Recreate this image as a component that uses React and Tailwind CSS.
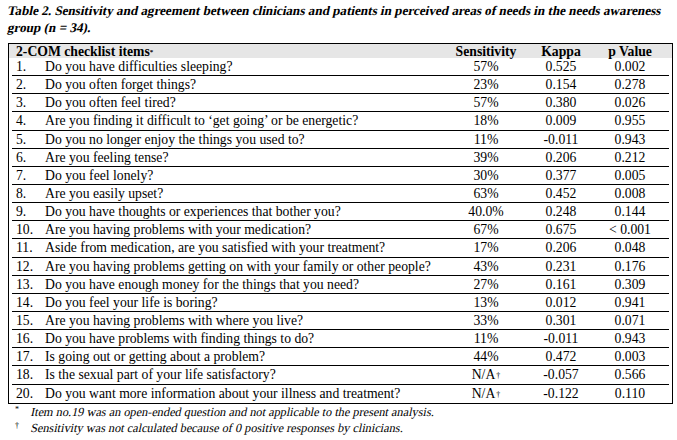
import React from 'react'

const rows = [
    ["1.", "Do you have difficulties sleeping?", "57%", "0.525", "0.002"],
    ["2.", "Do you often forget things?", "23%", "0.154", "0.278"],
    ["3.", "Do you often feel tired?", "57%", "0.380", "0.026"],
    ["4.", "Are you finding it difficult to \u2018get going\u2019 or be energetic?", "18%", "0.009", "0.955"],
    ["5.", "Do you no longer enjoy the things you used to?", "11%", "-0.011", "0.943"],
    ["6.", "Are you feeling tense?", "39%", "0.206", "0.212"],
    ["7.", "Do you feel lonely?", "30%", "0.377", "0.005"],
    ["8.", "Are you easily upset?", "63%", "0.452", "0.008"],
    ["9.", "Do you have thoughts or experiences that bother you?", "40.0%", "0.248", "0.144"],
    ["10.", "Are you having problems with your medication?", "67%", "0.675", "< 0.001"],
    ["11.", "Aside from medication, are you satisfied with your treatment?", "17%", "0.206", "0.048"],
    ["12.", "Are you having problems getting on with your family or other people?", "43%", "0.231", "0.176"],
    ["13.", "Do you have enough money for the things that you need?", "27%", "0.161", "0.309"],
    ["14.", "Do you feel your life is boring?", "13%", "0.012", "0.941"],
    ["15.", "Are you having problems with where you live?", "33%", "0.301", "0.071"],
    ["16.", "Do you have problems with finding things to do?", "11%", "-0.011", "0.943"],
    ["17.", "Is going out or getting about a problem?", "44%", "0.472", "0.003"],
    ["18.", "Is the sexual part of your life satisfactory?", "N/A", "-0.057", "0.566"],
    ["20.", "Do you want more information about your illness and treatment?", "N/A", "-0.122", "0.110"],
]

// the serif italic face isn't available, so slanted upright text stands in for it
function Slant({ children }) {
    return <span className="inline-block -skew-x-12 whitespace-nowrap">{children}</span>
}

function Row({ r, last }) {
    const na = r[2] === "N/A"
    return (
        <div className={"flex items-center h-[18.15px] mx-[3px] " + (last ? "" : "border-b border-black")}>
            <span className="w-[33px] pl-[4px] shrink-0">{r[0]}</span>
            <span className="flex-1 whitespace-nowrap">{r[1]}</span>
            <span className="w-[72px] text-center shrink-0">
                {r[2]}{na && <sup className="text-[8px] ml-[1px] relative top-[-1px]">†</sup>}
            </span>
            <span className="w-[78px] text-center shrink-0">{r[3]}</span>
            <span className="w-[60px] text-center shrink-0">{r[4]}</span>
            <span className="w-[9px] shrink-0"></span>
        </div>
    )
}

export default function App() {
    return (
        <div className="w-[677px] h-[440px] bg-white text-black overflow-hidden" style={{ fontFamily: '"Liberation Serif", "Times New Roman", serif' }}>
            <div className="pl-[8px] pt-[2px] text-[13.15px] leading-[17px] font-bold flex flex-col items-start">
                <Slant>Table 2. Sensitivity and agreement between clinicians and patients in perceived areas of needs in the needs awareness</Slant>
                <Slant>group (n = 34).</Slant>
            </div>
            <div className="ml-[8px] mt-[7px] w-[665px] border border-black text-[13.7px] leading-[17px]">
                <div className="flex items-center h-[14px] bg-[#e6e6e6] font-bold">
                    <span className="flex-1 pl-[7px] whitespace-nowrap">
                        2-COM checklist items<sup className="text-[7px] relative top-[-2px]">*</sup>
                    </span>
                    <span className="w-[72px] text-center">Sensitivity</span>
                    <span className="w-[78px] text-center">Kappa</span>
                    <span className="w-[60px] text-center">p Value</span>
                    <span className="w-[12px]"></span>
                </div>
                {rows.map((r, i) => (
                    <Row key={r[0]} r={r} last={i === rows.length - 1} />
                ))}
            </div>
            <div className="text-[12.3px] leading-[16px]">
                <div className="flex">
                    <span className="w-[31px] pl-[15px] text-[8px] leading-[12px]">*</span>
                    <Slant>Item no.19 was an open-ended question and not applicable to the present analysis.</Slant>
                </div>
                <div className="flex">
                    <span className="w-[31px] pl-[15px] text-[8px] leading-[12px]">†</span>
                    <Slant>Sensitivity was not calculated because of 0 positive responses by clinicians.</Slant>
                </div>
            </div>
        </div>
    )
}
